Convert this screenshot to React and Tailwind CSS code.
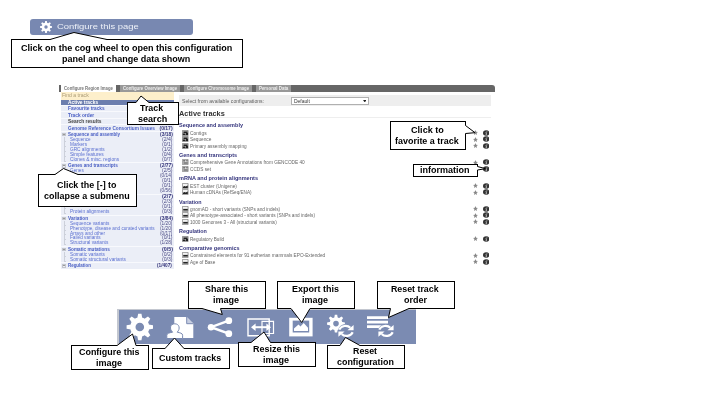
import { useLayoutEffect, useRef, useState } from "react";

// Text fitted horizontally to a given width.
function Fit({ w, children, className = "" }) {
  const ref = useRef(null);
  const [scale, setScale] = useState(1);
  useLayoutEffect(() => {
    setScale(w / ref.current.offsetWidth);
  }, [w]);
  return (
    <span className={`block shrink-0 whitespace-nowrap ${className}`} style={{ width: w }}>
      <span ref={ref} className="inline-block origin-left" style={{ transform: `scaleX(${scale})` }}>
        {children}
      </span>
    </span>
  );
}

function Cog({ cx = 14, cy = 14, r = 9, tooth = 4, ring = 5 }) {
  return (
    <g fill="#fff">
      {[0, 45, 90, 135, 180, 225, 270, 315].map((a) => (
        <path
          key={a}
          transform={`rotate(${a} ${cx} ${cy})`}
          d={`M${cx - tooth * 0.65} ${cy - r + 1}L${cx - tooth * 0.42} ${cy - r - tooth * 0.9}H${cx + tooth * 0.42}L${cx + tooth * 0.65} ${cy - r + 1}Z`}
        />
      ))}
      <circle cx={cx} cy={cy} r={r - ring / 2} fill="none" stroke="#fff" strokeWidth={ring} />
    </g>
  );
}

function Refresh() {
  return (
    <g>
      <ellipse cx="19" cy="18" rx="8" ry="7" fill="#7b8bb2" />
      <path d="M12.3 16.6C14 12.6 20.3 11.6 23.3 14.8M25.7 19.2C24 23.2 17.7 24.2 14.7 21" fill="none" stroke="#fff" strokeWidth="2.2" />
      <path d="M26.6 12V17.2H20.4ZM11.4 23.8V18.6H17.6Z" fill="#fff" />
    </g>
  );
}

const tools = [
  <Cog key="c" cx={13.8} cy={14} r={9.7} tooth={3.9} ring={5.4} />,
  <g key="u" fill="#fff">
    <path d="M8.3 4H20.7L27.3 10.5V25H8.3Z" />
    <path d="M20.7 4V10.7H27.3" fill="#c5cde0" stroke="#7b8bb2" strokeWidth="1" />
    <path d="M.8 25.5V22.2C.8 20.2 3.5 19.8 6.6 19.2C3 15.8 4.2 10.8 8.8 10.8S14.6 15.8 11.2 19.2C14 19.8 16.6 20.2 16.6 22.2V25.5Z" stroke="#7b8bb2" strokeWidth="1" />
  </g>,
  <g key="s" fill="#fff">
    <path d="M22.8 7.7L5 14.2L22.8 20.7" fill="none" stroke="#fff" strokeWidth="2.5" />
    <circle cx="22.8" cy="7.7" r="3.4" />
    <circle cx="5" cy="14.2" r="3.2" />
    <circle cx="22.8" cy="20.7" r="3.4" />
  </g>,
  <g key="r" fill="none" stroke="#fff">
    <path d="M1 6H22.2V22.7H1Z" strokeWidth="1.4" />
    <path d="M15 8.3H26.5V20.5H15Z" strokeWidth="1.2" />
    <path d="M6 14.2H22" strokeWidth="2" />
    <path d="M4 14.2L8.6 10.4V18ZM24 14.2L19.4 10.4V18Z" fill="#fff" stroke="none" />
  </g>,
  <g key="e">
    <path d="M2.2 4.8H25.6V23.4H2.2Z" fill="#fff" />
    <path d="M5.7 7.6H22.2V19.5H5.7Z" fill="#7b8bb2" />
    <path d="M7 17.9V15.5L11.5 11.5L13.5 13.5L16.7 10L21 14.8V17.9Z" fill="#fff" />
  </g>,
  <g key="rc">
    <Cog cx={9} cy={10.6} r={6.4} tooth={2.8} ring={3.6} />
    <Refresh />
  </g>,
  <g key="rt">
    <path d="M0 4.7H21M0 9.2H21M0 13.6H17" fill="none" stroke="#fff" strokeWidth="2.7" />
    <Refresh />
  </g>,
];

const tree = [
  ["Sequence and assembly", 52, "(3/18)", [["Sequence", 21, "(2/4)"], ["Markers", 17, "(0/1)"], ["GRC alignments", 35, "(1/2)"], ["Simple features", 34, "(0/4)"], ["Clones & misc. regions", 49, "(0/7)"]]],
  ["Genes and transcripts", 50, "(2/77)", [["Genes", 14, "(2/5)"], ["", 0, "(0/14)"], ["", 0, "(0/1)"], ["", 0, "(0/1)"], ["", 0, "(0/56)"]]],
  ["", 0, "(2/7)", [["", 0, "(2/3)"], ["", 0, "(0/1)"], ["Protein alignments", 39, "(0/3)"]]],
  ["Variation", 20, "(3/84)", [["Sequence variants", 39, "(1/20)"], ["Phenotype, disease and curated variants", 85, "(1/20)"], ["Arrays and other", 35, "(0/17)"], ["Failed variants", 31, "(0/1)"], ["Structural variants", 38, "(1/28)"]]],
  ["Somatic mutations", 42, "(0/5)", [["Somatic variants", 35, "(0/2)"], ["Somatic structural variants", 56, "(0/3)"]]],
  ["Regulation", 23, "(1/407)", []],
];

const groups = [
  ["Sequence and assembly", 64, [["Contigs", 17, 1], ["Sequence", 21, 1], ["Primary assembly mapping", 57, 1]]],
  ["Genes and transcripts", 58, [["Comprehensive Gene Annotations from GENCODE 40", 115, 2], ["CCDS set", 21, 2]]],
  ["mRNA and protein alignments", 79, [["EST cluster (Unigene)", 47, 3], ["Human cDNAs (RefSeq/ENA)", 62, 3]]],
  ["Variation", 23, [["gnomAD - short variants (SNPs and indels)", 90, 4], ["All phenotype-associated - short variants (SNPs and indels)", 125, 4], ["1000 Genomes 3 - All (structural variants)", 87, 4]]],
  ["Regulation", 28, [["Regulatory Build", 34, 1]]],
  ["Comparative genomics", 61, [["Constrained elements for 91 eutherian mammals EPO-Extended", 135, 4], ["Age of Base", 25, 4]]],
];

const marks = {
  1: "M1.5 1.5H5.5V3H1.5ZM.8 3.5H3.5V5H.8ZM4 3H6V5H4Z",
  2: "M1.3 1.3H2.8V2.5H1.3ZM3.5 1.6H5.8V2.3H3.5ZM1.3 3.5H5.7V4.4H1.3Z",
  3: "M1 3.7L2.4 3L3.7 3.6L5.8 2.4V5H1Z",
  4: "M1.2 2.9H5.8V4.6H1.2Z",
};

function TrackRow({ label, w, kind }) {
  return (
    <div className="flex h-[6.45px] items-center pl-[3px] text-[5.2px] text-[#666]">
      <svg className="h-[6px] w-[6.5px] shrink-0" viewBox="0 0 6.5 6">
        <path d="M.4 .4H6.1V5.6H.4Z" fill={kind === 1 ? "#bbb" : "#f2f2f2"} stroke="#777" strokeWidth=".7" />
        <path d={marks[kind]} fill="#222" />
      </svg>
      <Fit w={w} className="ml-[1.5px]">{label}</Fit>
      <div className="ml-auto flex items-center gap-[5px] pr-[2px]">
        <svg className="h-[5px] w-[5px]" viewBox="0 0 10 10">
          <path d="M5 0L6.4 3.5L10 3.8L7.2 6.1L8.1 10L5 7.8L1.9 10L2.8 6.1L0 3.8L3.6 3.5Z" fill="#888" />
        </svg>
        <svg className="h-[6px] w-[6.4px]" viewBox="0 0 12 11">
          <ellipse cx="6" cy="5.5" rx="6" ry="5.2" fill="#333" />
          <path d="M6.5 2.3H8.3M4.5 5H7L5.5 8.7H7.5" fill="none" stroke="#ddd" strokeWidth="1.2" />
        </svg>
      </div>
    </div>
  );
}

function SideLink({ w, children, className = "text-[#4a5fc4]" }) {
  return (
    <div className={`flex h-[6.45px] items-center border-b border-[#f8f9fd] pl-[7px] font-bold ${className}`}>
      <Fit w={w}>{children}</Fit>
    </div>
  );
}

function Sidebar() {
  return (
    <div className="ml-[2px] h-[177px] w-[112.5px] shrink-0 bg-[#ebeef7] text-[5px] leading-[5px]">
      <div className="flex h-[8px] items-center bg-[#fdefcb] pl-[1px] text-[5.3px] text-[#a99a75]"><Fit w={27}>Find a track</Fit></div>
      <SideLink w={30} className="bg-[#6c7eae] text-white">Active tracks</SideLink>
      <SideLink w={37}>Favourite tracks</SideLink>
      <SideLink w={26}>Track order</SideLink>
      <SideLink w={33} className="text-[#444]">Search results</SideLink>
      <div className="mb-[0.4px] flex h-[6.6px] items-center justify-between border-b border-[#f8f9fd] pr-px pl-[7px] font-bold text-[#4a5fc4]">
        <Fit w={87}>Genome Reference Consortium Issues</Fit>
        <Fit w={13} className="text-[#34347a]">(0/17)</Fit>
      </div>
      {tree.map(([name, w, count, kids]) => (
        <div key={count} className="border-b border-[#f8f9fd] pb-[0.8px]">
          <div className="flex h-[4.9px] items-center pr-px pl-[1px] font-bold text-[#4a5fc4]">
            <span className="mr-[2.5px] flex size-[3.5px] items-center justify-center border border-[#c2c5cc]">
              <span className="h-px w-[2px] bg-[#999]" />
            </span>
            {name && <Fit w={w}>{name}</Fit>}
            <Fit w={count.length * 2.15} className="ml-auto text-[#34347a]">{count}</Fit>
          </div>
          {kids.map(([kid, kw, n], i) => (
            <div key={i} className="flex h-[4.9px] items-center pr-px pl-[3px] text-[#5a6fd0]">
              <span className="mr-[4.3px] h-[4.9px] w-[2px] border-b border-l border-[#ccd0da]" />
              {kid && <Fit w={kw}>{kid}</Fit>}
              <Fit w={n.length * 2.05} className="ml-auto text-[#4b4b85]">{n}</Fit>
            </div>
          ))}
        </div>
      ))}
    </div>
  );
}

function Tab({ w, children, className = "bg-[#999] text-[#eee]" }) {
  return <div className={`flex h-full items-center px-[3px] ${className}`}><Fit w={w}>{children}</Fit></div>;
}

function Panel() {
  return (
    <div className="mt-[50px] ml-[59px] h-[184px] w-[436px] overflow-hidden bg-white blur-[0.35px]">
      <div className="flex h-[6.5px] gap-[4px] rounded-tr-[3px] bg-[#666] pl-[2px] text-[5px] leading-[5px] font-bold">
        <Tab w={49} className="bg-white text-[#777]">Configure Region Image</Tab>
        <Tab w={54}>Configure Overview Image</Tab>
        <Tab w={62}>Configure Chromosome Image</Tab>
        <Tab w={29}>Personal Data</Tab>
      </div>
      <div className="flex">
        <Sidebar />
        <div className="ml-[5.5px] w-[312px] pt-[3.7px] leading-[6px]">
          <div className="flex h-[11.3px] items-center bg-[#eee] pl-[3px] text-[5.3px] text-[#5c5c5c]">
            <Fit w={82}>Select from available configurations:</Fit>
            <div className="ml-[27px] flex h-[8px] w-[78px] items-center justify-between border border-[#b0b0b0] bg-white px-[2px] text-[#333]">
              <Fit w={16}>Default</Fit>
              <svg className="h-[2.5px] w-[3.5px]" viewBox="0 0 4 3"><path d="M0 0H4L2 3Z" fill="#222" /></svg>
            </div>
          </div>
          <div className="flex h-[12px] items-center border-b border-[#eee] pt-[3.5px] text-[7.2px] font-bold text-[#333]">
            <Fit w={46}>Active tracks</Fit>
          </div>
          <div className="pt-[2.8px]">
            {groups.map(([title, w, rows]) => (
              <section key={title} className="mb-[2.2px]">
                <div className="flex h-[8.2px] items-center text-[5.6px] font-bold text-[#33337c]"><Fit w={w}>{title}</Fit></div>
                {rows.map(([label, rw, kind]) => <TrackRow key={label} label={label} w={rw} kind={kind} />)}
              </section>
            ))}
          </div>
        </div>
      </div>
    </div>
  );
}

// box: [x, y, width, height]; tail: base start, tip, base end
const callouts = [
  { box: [11, 39, 232, 29], tail: [[50, 39.5], [74, 32.5], [107, 39.5]], lines: [["Click on the cog wheel to open this configuration", 211], ["panel and change data shown", 128]] },
  { box: [127, 102, 52, 23], tail: [[136, 102.5], [141, 96], [149, 102.5]], lines: [["Track", 23.5], ["search", 29]] },
  { box: [38, 174, 99, 33], tail: [[55, 174.5], [63.5, 168.5], [78, 174.5]], lines: [["Click the [-] to", 60], ["collapse a submenu", 86]] },
  { box: [390, 121, 76, 29], tail: [[465.5, 125.5], [475, 132.7], [465.5, 133.5]], lines: [["Click to", 33], ["favorite a track", 64]] },
  { box: [413, 164, 65, 13], tail: [[477.5, 166.5], [485.5, 168.7], [477.5, 170]], lines: [["information", 50]] },
  { box: [188, 281, 78, 28], tail: [[202, 308.5], [222.3, 314.5], [220.5, 308.5]], lines: [["Share this", 43], ["image", 26]] },
  { box: [277, 281, 78, 28], tail: [[291, 308.5], [301.7, 322.5], [310, 308.5]], lines: [["Export this", 47], ["image", 26]] },
  { box: [377, 281, 78, 28], tail: [[390.5, 308.5], [388.5, 317.5], [409, 308.5]], lines: [["Reset track", 48], ["order", 23]] },
  { box: [71, 345, 78, 25], tail: [[117, 345.5], [132.5, 334], [136, 345.5]], lines: [["Configure this", 61], ["image", 26]] },
  { box: [152, 348, 78, 21], tail: [[165, 348.5], [174.5, 338], [184, 348.5]], lines: [["Custom tracks", 62]] },
  { box: [238, 342, 78, 25], tail: [[251, 342.5], [264, 332], [270.5, 342.5]], lines: [["Resize this", 47], ["image", 26]] },
  { box: [327, 345, 78, 24], tail: [[340, 345.5], [345.5, 337.5], [360, 345.5]], lines: [["Reset", 24.5], ["configuration", 57]] },
];

function Callout({ box: [x, y, w, h], tail, lines }) {
  const [a, t, b] = tail;
  const side = a[0] === b[0];
  const base = side
    ? `M${a[0] - 1} ${a[1]}L${a}L${t}L${b}L${b[0] - 1} ${b[1]}Z`
    : `M${a[0]} ${a[1] + Math.sign(a[1] - t[1])}L${a}L${t}L${b}L${b[0]} ${b[1] + Math.sign(b[1] - t[1])}Z`;
  return (
    <>
      <div
        className="absolute flex flex-col items-center justify-center border border-black bg-white pr-[2px] pb-[1.5px] text-[9.4px] leading-[11px] font-bold text-black"
        style={{ left: x, top: y, width: w, height: h }}
      >
        {lines.map(([text, tw]) => <Fit key={text} w={tw}>{text}</Fit>)}
      </div>
      <svg className="absolute inset-0 h-[405px] w-[720px]" viewBox="0 0 720 405">
        <path d={base} fill="#fff" />
        <path d={`M${a}L${t}L${b}`} fill="none" stroke="#000" strokeWidth="1" />
      </svg>
    </>
  );
}

export default function App() {
  return (
    <div className="relative h-[405px] w-[720px] overflow-hidden bg-white pt-[19px] font-['Liberation_Sans',Arial,sans-serif]">
      <div className="ml-[30px] flex h-[16px] w-[163px] items-center rounded-[3px] bg-[#7888b1] pl-[10px] text-[7.6px] leading-[10px] text-[#eef1f8] blur-[0.3px]">
        <svg className="mr-[5px] size-[12px]" viewBox="0 0 28 28"><Cog r={10} tooth={4.5} ring={6} /></svg>
        <Fit w={82}>Configure this page</Fit>
      </div>
      <Panel />
      <div className="mt-[40px] ml-[117px] flex h-[34.5px] w-[299px] items-center gap-[12.2px] border-t border-l-2 border-[#c3c7d0] bg-[#7b8bb2] pl-[7px] blur-[0.3px]">
        {tools.map((icon, i) => (
          <svg key={i} className="size-[28px] shrink-0" viewBox="0 0 28 28">{icon}</svg>
        ))}
      </div>
      {callouts.map((c, i) => <Callout key={i} {...c} />)}
    </div>
  );
}
